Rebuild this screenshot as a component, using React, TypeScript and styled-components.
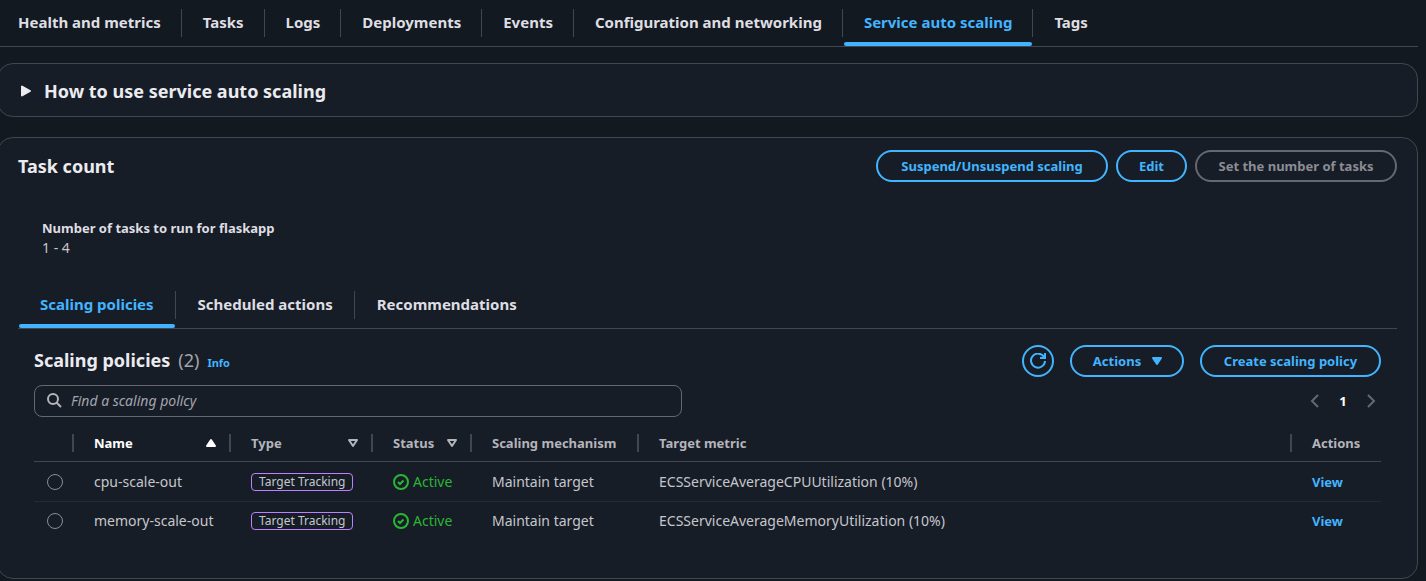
import React, { useState } from 'react';
import styled, { createGlobalStyle } from 'styled-components';

const color = {
  page: '#131920',
  panel: '#161d26',
  border: '#424650',
  rowBorder: '#232b37',
  control: '#656871',
  blue: '#42b4ff',
  heading: '#ebebf0',
  label: '#dedee3',
  text: '#c6c6cd',
  column: '#b4b4bb',
  muted: '#a4a4ad',
  disabled: '#8c8c94',
  green: '#2bb534',
  purple: '#bf80ff',
};

const GlobalStyle = createGlobalStyle`
  *, *::before, *::after { box-sizing: border-box; }
  body {
    margin: 0;
    background: ${color.page};
    color: ${color.text};
    font: 400 14px/20px "Noto Sans", "Open Sans", sans-serif;
    overflow-x: hidden;
  }
  button, input { font: inherit; }
`;

const Page = styled.main`
  margin: 0 8px 0 -3px;
`;

const TabBar = styled.div`
  display: flex;
  height: 47px;
  padding-left: 1px;
  border-bottom: 1px solid ${color.border};
`;

const TabItem = styled.div`
  display: flex;
  align-items: center;

  & + &::before {
    content: '';
    width: 1px;
    height: 28px;
    margin-right: 1px;
    background: ${color.border};
  }
`;

const TabButton = styled.button<{ $active: boolean }>`
  display: grid;
  grid-template-rows: 1fr 4px;
  align-items: center;
  height: 46px;
  padding: 2px 0 0;
  border: 0;
  background: none;
  color: ${(p) => (p.$active ? color.blue : color.label)};
  font-size: 15px;
  font-weight: 700;
  white-space: nowrap;
  cursor: pointer;

  &::after {
    content: '';
    height: 4px;
    border-radius: 2px;
    background: ${(p) => (p.$active ? color.blue : 'transparent')};
  }
`;

const TabLabel = styled.span<{ $space: number }>`
  padding: 0 ${(p) => p.$space}px;
`;

const Panel = styled.section`
  margin-top: 16px;
  border: 1px solid ${color.border};
  border-radius: 16px;
  background: ${color.panel};

  & + & {
    margin-top: 20px;
  }
`;

const ExpandButton = styled.button`
  display: flex;
  align-items: center;
  gap: 10px;
  width: 100%;
  padding: 15px 20px 13px;
  border: 0;
  background: none;
  color: ${color.heading};
  font-size: 18px;
  font-weight: 700;
  line-height: 24px;
  text-align: left;
  cursor: pointer;
`;

const TaskCount = styled.div`
  padding: 12px 20px 38px;
`;

const HeaderRow = styled.header`
  display: flex;
  align-items: center;
  justify-content: space-between;
`;

const Title = styled.h2`
  display: flex;
  align-items: baseline;
  gap: 8px;
  margin: 0;
  color: ${color.heading};
  font-size: 18px;
  font-weight: 700;
  line-height: 24px;
`;

const Counter = styled.span`
  color: ${color.muted};
  font-weight: 400;
`;

const InfoLink = styled.a`
  color: ${color.blue};
  font-size: 11px;
  font-weight: 700;
  text-decoration: none;
`;

const ButtonGroup = styled.div<{ $gap: number }>`
  display: flex;
  gap: ${(p) => p.$gap}px;
`;

const Button = styled.button<{ $width: number }>`
  display: flex;
  align-items: center;
  justify-content: center;
  gap: 8px;
  min-width: ${(p) => p.$width}px;
  height: 32px;
  padding: 0;
  border: 2px solid ${color.blue};
  border-radius: 16px;
  background: none;
  color: ${color.blue};
  font-size: 13px;
  font-weight: 700;
  white-space: nowrap;
  cursor: pointer;

  &:disabled {
    border-color: ${color.control};
    color: ${color.disabled};
    cursor: default;
  }
`;

const MenuButton = styled(Button)`
  padding: 0 16px 0 20px;
`;

const KeyValue = styled.dl`
  margin: 36px 24px 24px;
`;

const Key = styled.dt`
  color: ${color.label};
  font-size: 13px;
  font-weight: 700;
`;

const Value = styled.dd`
  margin: 0;
`;

const TabContent = styled.div`
  padding: 16px 16px 0;
`;

const Tools = styled.div`
  display: flex;
  align-items: center;
  justify-content: space-between;
  margin: 8px 0;
`;

const SearchBox = styled.label`
  display: flex;
  align-items: center;
  gap: 9px;
  flex: 0 1 648px;
  height: 32px;
  padding: 0 11px;
  border: 1px solid ${color.control};
  border-radius: 8px;
  color: ${color.column};
`;

const SearchInput = styled.input`
  flex: 1;
  min-width: 0;
  padding: 0;
  border: 0;
  outline: 0;
  background: none;
  color: ${color.text};

  &::placeholder {
    color: ${color.muted};
    font-style: italic;
    opacity: 1;
  }
`;

const Pagination = styled.nav`
  display: flex;
  gap: 8px;
`;

const PageButton = styled.button`
  display: flex;
  align-items: center;
  justify-content: center;
  width: 20px;
  height: 20px;
  padding: 0;
  border: 0;
  background: none;
  color: #fff;
  font-size: 13px;
  font-weight: 700;

  &:disabled {
    color: ${color.control};
  }
`;

const Table = styled.table`
  width: 100%;
  table-layout: fixed;
  border-collapse: separate;
  border-spacing: 0;
`;

const Col = styled.col<{ $width?: number }>`
  width: ${(p) => (p.$width ? `${p.$width}px` : 'auto')};
`;

const HeadCell = styled.th<{ $sorted?: boolean }>`
  height: 37px;
  padding: 0;
  border-bottom: 1px solid ${color.border};
  color: ${(p) => (p.$sorted ? '#fff' : color.column)};
  font-size: 13px;
  font-weight: 700;
  text-align: left;
`;

const HeadContent = styled.div<{ $last?: boolean }>`
  display: flex;
  align-items: center;
  justify-content: space-between;
  height: 18px;
  padding: 0 10px 0 20px;
  border-right: ${(p) => (p.$last ? '0' : `2px solid ${color.border}`)};
  white-space: nowrap;
`;

const Row = styled.tr`
  &:not(:last-child) > td {
    height: 40px;
    border-bottom: 1px solid ${color.rowBorder};
  }
`;

const Cell = styled.td`
  height: 38px;
  padding: 0 0 0 20px;
  white-space: nowrap;
`;

const SelectCell = styled(Cell)`
  padding-left: 13px;
`;

const Radio = styled.input`
  display: block;
  appearance: none;
  width: 16px;
  height: 16px;
  margin: 0;
  border: 1px solid ${color.disabled};
  border-radius: 50%;

  &:checked {
    border: 5px solid ${color.blue};
  }
`;

const Tag = styled.div`
  width: fit-content;
  height: 18px;
  padding: 0 7px;
  border: 1px solid ${color.purple};
  border-radius: 4px;
  font-size: 12px;
  line-height: 16px;
`;

const Status = styled.div`
  display: flex;
  align-items: center;
  gap: 4px;
  color: ${color.green};
`;

const ViewLink = styled.a`
  color: ${color.blue};
  font-size: 13px;
  font-weight: 700;
  text-decoration: none;
`;

const Svg = styled.svg`
  display: block;
  flex: none;
  width: 16px;
  height: 16px;
  fill: none;
  stroke: currentColor;
  stroke-width: 2px;
`;

const icons = {
  caretRight: <path d="M4 3.500v9L12 8z" fill="currentColor" strokeLinejoin="round" />,
  caretDown: <path d="M4 5h8l-4 6z" fill="currentColor" strokeLinejoin="round" />,
  caretUp: <path d="M4 11h8L8 5z" fill="currentColor" strokeLinejoin="round" />,
  caretDownOutline: <path d="M4 5h8l-4 6z" strokeLinejoin="round" />,
  angleLeft: <path d="M11 2 5 8l6 6" />,
  angleRight: <path d="m5 2 6 6-6 6" />,
  refresh: (
    <>
      <path d="M10 5h5V0" />
      <path d="M15 8a7 7 0 1 1-1-4" />
    </>
  ),
  search: (
    <>
      <circle cx="7" cy="6" r="5" />
      <path d="m15 14-4.500-4.500" />
    </>
  ),
  success: (
    <>
      <circle cx="8" cy="8" r="7" />
      <path d="m5 8 2 2 3.500-3.500" />
    </>
  ),
};

const Icon = ({ name }: { name: keyof typeof icons }) => (
  <Svg viewBox="0 0 16 16" aria-hidden="true">
    {icons[name]}
  </Svg>
);

interface TabsProps {
  label: string;
  items: string[];
  initial: string;
  space: number;
}

const Tabs = ({ label, items, initial, space }: TabsProps) => {
  const [active, setActive] = useState(initial);
  return (
    <TabBar role="tablist" aria-label={label}>
      {items.map((item) => (
        <TabItem key={item} role="presentation">
          <TabButton
            type="button"
            role="tab"
            aria-selected={item === active}
            $active={item === active}
            onClick={() => setActive(item)}
          >
            <TabLabel $space={space}>{item}</TabLabel>
          </TabButton>
        </TabItem>
      ))}
    </TabBar>
  );
};

const serviceTabs = [
  'Health and metrics',
  'Tasks',
  'Logs',
  'Deployments',
  'Events',
  'Configuration and networking',
  'Service auto scaling',
  'Tags',
];

const scalingTabs = ['Scaling policies', 'Scheduled actions', 'Recommendations'];

const columns: { title: string; width?: number; icon?: keyof typeof icons; sorted?: boolean }[] = [
  { title: '', width: 40 },
  { title: 'Name', width: 157, icon: 'caretUp', sorted: true },
  { title: 'Type', width: 142, icon: 'caretDownOutline' },
  { title: 'Status', width: 99, icon: 'caretDownOutline' },
  { title: 'Scaling mechanism', width: 167 },
  { title: 'Target metric' },
  { title: 'Actions', width: 89 },
];

const policies = [
  { name: 'cpu-scale-out', metric: 'ECSServiceAverageCPUUtilization (10%)' },
  { name: 'memory-scale-out', metric: 'ECSServiceAverageMemoryUtilization (10%)' },
];

const PolicyTable = () => {
  const [selected, setSelected] = useState('');
  return (
    <Table>
      <colgroup>
        {columns.map((c) => (
          <Col key={c.title} $width={c.width} />
        ))}
      </colgroup>
      <thead>
        <tr>
          {columns.map((c, i) => (
            <HeadCell key={c.title} scope="col" $sorted={c.sorted}>
              <HeadContent $last={i === columns.length - 1}>
                {c.title}
                {c.icon && <Icon name={c.icon} />}
              </HeadContent>
            </HeadCell>
          ))}
        </tr>
      </thead>
      <tbody>
        {policies.map((p) => (
          <Row key={p.name}>
            <SelectCell>
              <Radio
                type="radio"
                name="policy"
                aria-label={p.name}
                checked={selected === p.name}
                onChange={() => setSelected(p.name)}
              />
            </SelectCell>
            <Cell>{p.name}</Cell>
            <Cell>
              <Tag>Target Tracking</Tag>
            </Cell>
            <Cell>
              <Status>
                <Icon name="success" />
                Active
              </Status>
            </Cell>
            <Cell>Maintain target</Cell>
            <Cell>{p.metric}</Cell>
            <Cell>
              <ViewLink href="#view">View</ViewLink>
            </Cell>
          </Row>
        ))}
      </tbody>
    </Table>
  );
};

export default function App() {
  return (
    <Page>
      <GlobalStyle />
      <Tabs label="Service" items={serviceTabs} initial="Service auto scaling" space={20} />
      <Panel>
        <ExpandButton type="button" aria-expanded="false">
          <Icon name="caretRight" />
          How to use service auto scaling
        </ExpandButton>
      </Panel>
      <Panel>
        <TaskCount>
          <HeaderRow>
            <Title>Task count</Title>
            <ButtonGroup $gap={8}>
              <Button type="button" $width={232}>
                Suspend/Unsuspend scaling
              </Button>
              <Button type="button" $width={71}>
                Edit
              </Button>
              <Button type="button" $width={202} disabled>
                Set the number of tasks
              </Button>
            </ButtonGroup>
          </HeaderRow>
          <KeyValue>
            <Key>Number of tasks to run for flaskapp</Key>
            <Value>1 - 4</Value>
          </KeyValue>
          <Tabs label="Scaling" items={scalingTabs} initial="Scaling policies" space={21} />
          <TabContent>
            <HeaderRow>
              <Title>
                Scaling policies <Counter>(2)</Counter>
                <InfoLink href="#info">Info</InfoLink>
              </Title>
              <ButtonGroup $gap={16}>
                <Button type="button" $width={32} aria-label="Refresh">
                  <Icon name="refresh" />
                </Button>
                <MenuButton type="button" $width={114}>
                  Actions
                  <Icon name="caretDown" />
                </MenuButton>
                <Button type="button" $width={181}>
                  Create scaling policy
                </Button>
              </ButtonGroup>
            </HeaderRow>
            <Tools>
              <SearchBox>
                <Icon name="search" />
                <SearchInput type="text" placeholder="Find a scaling policy" aria-label="Find a scaling policy" />
              </SearchBox>
              <Pagination aria-label="Pagination">
                <PageButton type="button" aria-label="Previous page" disabled>
                  <Icon name="angleLeft" />
                </PageButton>
                <PageButton type="button" aria-current="page">
                  1
                </PageButton>
                <PageButton type="button" aria-label="Next page" disabled>
                  <Icon name="angleRight" />
                </PageButton>
              </Pagination>
            </Tools>
            <PolicyTable />
          </TabContent>
        </TaskCount>
      </Panel>
    </Page>
  );
}
